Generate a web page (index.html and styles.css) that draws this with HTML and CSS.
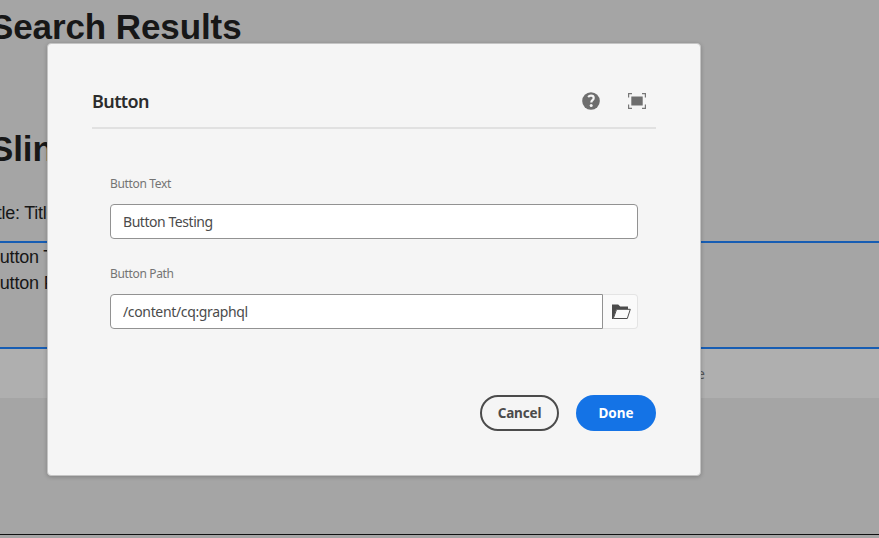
FILE: index.html
```html
<!DOCTYPE html>
<html lang="en">
<head>
<meta charset="utf-8">
<title>Button</title>
<link rel="stylesheet" href="styles.css">
</head>
<body>
<main class="page">
  <h1 class="heading">Search Results</h1>
  <h1 class="heading heading-second">Sling</h1>
  <p class="subtitle">Title: Title</p>
  <section class="selected">
    <p>Button Text</p>
    <p>Button Path</p>
  </section>
  <div class="dropzone"><span>Drag components here</span></div>
  <hr class="rule">
</main>
<div class="dialog" role="dialog" aria-labelledby="dialog-title">
  <header class="dialog-header">
    <h2 id="dialog-title">Button</h2>
    <div class="header-actions">
      <button class="icon-button" aria-label="Help">
        <svg width="18" height="18" viewBox="0 0 18 18"><circle cx="9" cy="9" r="8.8" fill="#6e6e6e"/><path d="M6.1 5C6.9 4.1 7.8 3.7 9 3.7c1.7 0 2.7.9 2.7 2.3 0 1.1-.6 1.7-1.4 2.4-.7.6-1 1-1 2.1" fill="none" stroke="#f5f5f5" stroke-width="2.2"/><circle cx="9.2" cy="13.6" r="1.5" fill="#f5f5f5"/></svg>
      </button>
      <button class="icon-button" aria-label="Toggle fullscreen">
        <svg width="18" height="16" viewBox="0 0 18 16"><path d="M3.3 3.5h11.4v9H3.3z" fill="#6e6e6e"/><path d="M.6 4.5V.6H4M14 .6h3.4v3.9M17.4 11.5v3.9H14M4 15.4H.6v-3.9" fill="none" stroke="#777" stroke-width="1.2"/></svg>
      </button>
    </div>
  </header>
  <form class="fields">
    <label for="text">Button Text</label>
    <input class="input" id="text" type="text" value="Button Testing">
    <label for="path">Button Path</label>
    <div class="path-field">
      <input class="input path-input" id="path" type="text" value="/content/cq:graphql">
      <button class="browse" type="button" aria-label="Browse">
        <svg width="19" height="16" viewBox="0 0 19 16"><path d="M0 15V.5h6.2l2 2H16v3H4.2L1.2 15z" fill="#4b4b4b"/><path d="M4.6 5.3h13.7l-3 9.2H1.3z" fill="#fafafa" stroke="#4b4b4b" stroke-width="1"/></svg>
      </button>
    </div>
  </form>
  <footer class="dialog-footer">
    <button class="button cancel">Cancel</button>
    <button class="button done">Done</button>
  </footer>
</div>
</body>
</html>
```
FILE: styles.css
```css
* { box-sizing: border-box; }
body { margin: 0; overflow: hidden; background: #a5a5a5; font-family: "Noto Sans", sans-serif; }
h1, h2, p { margin: 0; font-weight: normal; }
button { padding: 0; border: 0; background: none; font-family: inherit; }
svg { display: block; }

.page { height: 538px; overflow: hidden; padding-top: 6px; font-family: "Liberation Sans", sans-serif; color: #171717; }
.heading { margin-left: -10px; font-size: 35px; letter-spacing: -.1px; line-height: 42px; font-weight: bold; }
.heading-second { margin-top: 80px; }
.subtitle { margin: 30px 0 0 -17px; height: 41px; font-size: 18px; letter-spacing: -.25px; line-height: 26px; }
.selected { height: 108px; padding-top: 1px; border: solid #175db3; border-width: 2px 0; font-size: 18px; letter-spacing: -.2px; line-height: 26px; }
.selected p { margin-left: -12px; }
.dropzone { height: 49px; padding-right: 174px; background: #afafaf; color: #555; font: 14px/50px "Noto Sans", sans-serif; text-align: right; }
.rule { height: 1px; margin: 136px 0 0; border: 0; background: #111; }

.dialog { position: absolute; top: 43px; left: 47px; width: 654px; height: 433px; padding: 36px 44px 0; border: 1px solid #c4c4c4; border-radius: 4px; background: #f5f5f5; box-shadow: 0 1px 4px rgba(0, 0, 0, .22); }
.dialog-header { display: flex; justify-content: space-between; height: 49px; padding: 0 10px 0 0; border-bottom: 2px solid #e1e1e1; }
.dialog-header h2 { color: #2c2c2c; font-size: 18px; letter-spacing: -.6px; line-height: 42px; font-weight: 600; }
.header-actions { display: flex; gap: 28px; height: 42px; align-items: center; }

.fields { padding: 44px 18px 0; }
.fields label { display: block; height: 31px; color: #747474; font-size: 12px; letter-spacing: -.35px; line-height: 22px; }
.input { display: block; width: 100%; height: 35px; margin: 0 0 24px; padding: 0 12px 0; border: 1px solid #929292; border-radius: 4px; background: #fff; color: #4b4b4b; font: 14px "Noto Sans", sans-serif; letter-spacing: -.45px; }
.path-field { display: flex; }
.path-input { flex: 1; margin: 0; border-radius: 4px 0 0 4px; letter-spacing: -.35px; }
.browse { display: grid; place-items: center; width: 35px; height: 35px; padding-left: 2px; border: 1px solid #e4e4e4; border-left: 0; border-radius: 0 4px 4px 0; background: #fafafa; }

.dialog-footer { display: flex; justify-content: flex-end; gap: 17px; margin-top: 66px; }
.button { height: 36px; padding-bottom: 1px; border-radius: 18px; font-size: 13.5px; font-weight: 700; }
.cancel { width: 79px; border: 2px solid #4b4b4b; color: #4b4b4b; letter-spacing: -.15px; }
.done { width: 80px; background: #1473e6; color: #fff; }
```
